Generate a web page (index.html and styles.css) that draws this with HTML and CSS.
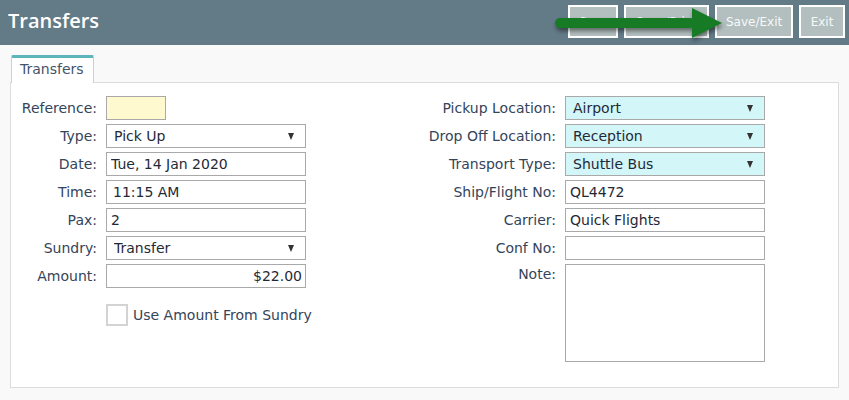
FILE: index.html
```html
<!DOCTYPE html>
<html>
<head>
<meta charset="utf-8">
<link rel="stylesheet" href="styles.css">
</head>
<body>
<header class="topbar">
  <h1 class="title">Transfers</h1>
  <div class="actions">
    <button class="btn btn-save">Save</button>
    <button class="btn btn-print">Save/Print</button>
    <button class="btn btn-saveexit">Save/Exit</button>
    <button class="btn btn-exit">Exit</button>
  </div>
  <svg class="pointer" width="180" height="40" viewBox="0 0 180 40">
    <rect x="0" y="13" width="140" height="10" rx="5" fill="#177b25"/>
    <polygon points="137,3 167,18 137,33" fill="#177b25"/>
  </svg>
</header>
<main class="content">
  <div class="tabs"><div class="tab">Transfers</div></div>
  <div class="panel">
    <div class="col col-left">
      <label class="lbl">Reference:</label>
      <div class="field"><input class="inp inp-ref" type="text"></div>
      <label class="lbl">Type:</label>
      <div class="field sel"><select class="inp"><option>Pick Up</option></select></div>
      <label class="lbl">Date:</label>
      <div class="field"><input class="inp" type="text" value="Tue, 14 Jan 2020"></div>
      <label class="lbl">Time:</label>
      <div class="field"><input class="inp inp-time" type="text" value="11:15 AM"></div>
      <label class="lbl">Pax:</label>
      <div class="field"><input class="inp" type="text" value="2"></div>
      <label class="lbl">Sundry:</label>
      <div class="field sel"><select class="inp"><option>Transfer</option></select></div>
      <label class="lbl">Amount:</label>
      <div class="field"><input class="inp inp-amount" type="text" value="$22.00"></div>
      <div class="spacer"></div>
      <div class="check-row"><span class="checkbox"></span><span class="check-text">Use Amount From Sundry</span></div>
    </div>
    <div class="col col-right">
      <label class="lbl">Pickup Location:</label>
      <div class="field sel"><select class="inp inp-cyan"><option>Airport</option></select></div>
      <label class="lbl">Drop Off Location:</label>
      <div class="field sel"><select class="inp inp-cyan"><option>Reception</option></select></div>
      <label class="lbl">Transport Type:</label>
      <div class="field sel"><select class="inp inp-cyan"><option>Shuttle Bus</option></select></div>
      <label class="lbl">Ship/Flight No:</label>
      <div class="field"><input class="inp" type="text" value="QL4472"></div>
      <label class="lbl">Carrier:</label>
      <div class="field"><input class="inp" type="text" value="Quick Flights"></div>
      <label class="lbl">Conf No:</label>
      <div class="field"><input class="inp" type="text"></div>
      <label class="lbl lbl-top">Note:</label>
      <div class="field"><textarea class="inp inp-note"></textarea></div>
    </div>
  </div>
</main>
</body>
</html>
```

FILE: styles.css
```css
* { box-sizing: border-box; }
html, body { margin: 0; padding: 0; }
body {
  width: 849px;
  height: 400px;
  background: #f9f9f9;
  font-family: "DejaVu Sans", Verdana, sans-serif;
  font-size: 14px;
  color: #2f3f52;
  overflow: hidden;
}
.topbar {
  position: relative;
  height: 45px;
  background: #637a87;
  display: flex;
  align-items: flex-start;
  justify-content: space-between;
}
.title {
  margin: 0;
  padding: 7px 0 0 8px;
  font-family: "Open Sans", sans-serif;
  font-weight: 600;
  font-size: 20px;
  line-height: 28px;
  color: #ffffff;
}
.actions {
  display: flex;
  gap: 6px;
  padding: 5px 4px 0 0;
}
.btn {
  height: 33px;
  border: 2px solid #ffffff;
  background: #b2bfbe;
  color: #f7f9f9;
  font-family: "DejaVu Sans", Verdana, sans-serif;
  font-size: 12px;
  padding: 0 9px;
  margin: 0;
}
.btn-save { width: 50px; }
.btn-print { width: 85px; }
.btn-saveexit { width: 78px; }
.btn-exit { width: 46px; }
.pointer {
  position: absolute;
  left: 555px;
  top: 5px;
  filter: drop-shadow(1px 3px 2px rgba(0,0,0,0.45));
}
.content {
  padding: 10px 10px 0 10px;
}
.tabs {
  display: flex;
  padding-left: 1px;
  height: 27px;
}
.tab {
  position: relative;
  z-index: 1;
  width: 83px;
  height: 28px;
  background: #ffffff;
  border: 1px solid #cfcfcf;
  border-top: 3px solid #5bb5ba;
  border-bottom: none;
  border-radius: 2px 2px 0 0;
  color: #44546a;
  font-size: 14px;
  line-height: 22px;
  padding-left: 8px;
}
.panel {
  height: 306px;
  background: #ffffff;
  border: 1px solid #dcdcdc;
  display: flex;
  padding-top: 13px;
}
.col {
  display: grid;
  row-gap: 4px;
  column-gap: 9px;
  align-content: start;
}
.col-left {
  grid-template-columns: 86px 200px;
  grid-template-rows: repeat(7, 24px) 8px 24px;
}
.col-right {
  grid-template-columns: 140px 200px;
  grid-template-rows: repeat(6, 24px) 98px;
  margin-left: 110px;
}
.lbl {
  text-align: right;
  line-height: 24px;
  white-space: nowrap;
  color: #34445a;
}
.lbl-top { line-height: 20px; }
.field { position: relative; height: 24px; }
.col-right .field:last-child { height: 98px; }
.inp {
  display: block;
  width: 200px;
  height: 24px;
  margin: 0;
  border: 1px solid #a9a9a9;
  border-radius: 0;
  background: #ffffff;
  font-family: "DejaVu Sans", Verdana, sans-serif;
  font-size: 14px;
  color: #1f2a36;
  padding: 0 4px;
  outline: none;
}
.inp-ref { width: 60px; background: #fff9cf; }
.inp-time { padding-left: 6px; }
.inp-amount { text-align: right; padding-right: 3px; }
.inp-cyan { background: #d3f6f9; }
select.inp {
  -webkit-appearance: none;
  appearance: none;
  padding-left: 7px;
}
.sel::after {
  content: "";
  position: absolute;
  right: 12px;
  top: 9px;
  border-left: 3.5px solid transparent;
  border-right: 3.5px solid transparent;
  border-top: 7px solid #333;
  pointer-events: none;
}
.inp-note {
  height: 98px;
  resize: none;
}
.spacer { grid-column: 1 / 3; height: 8px; }
.check-row {
  grid-column: 2 / 3;
  display: flex;
  align-items: flex-start;
  gap: 5px;
  white-space: nowrap;
}
.checkbox {
  width: 22px;
  height: 22px;
  border: 2px solid #d3d3d3;
  background: #ffffff;
  flex: none;
}
.check-text { color: #34445a; line-height: 22px; }
```
